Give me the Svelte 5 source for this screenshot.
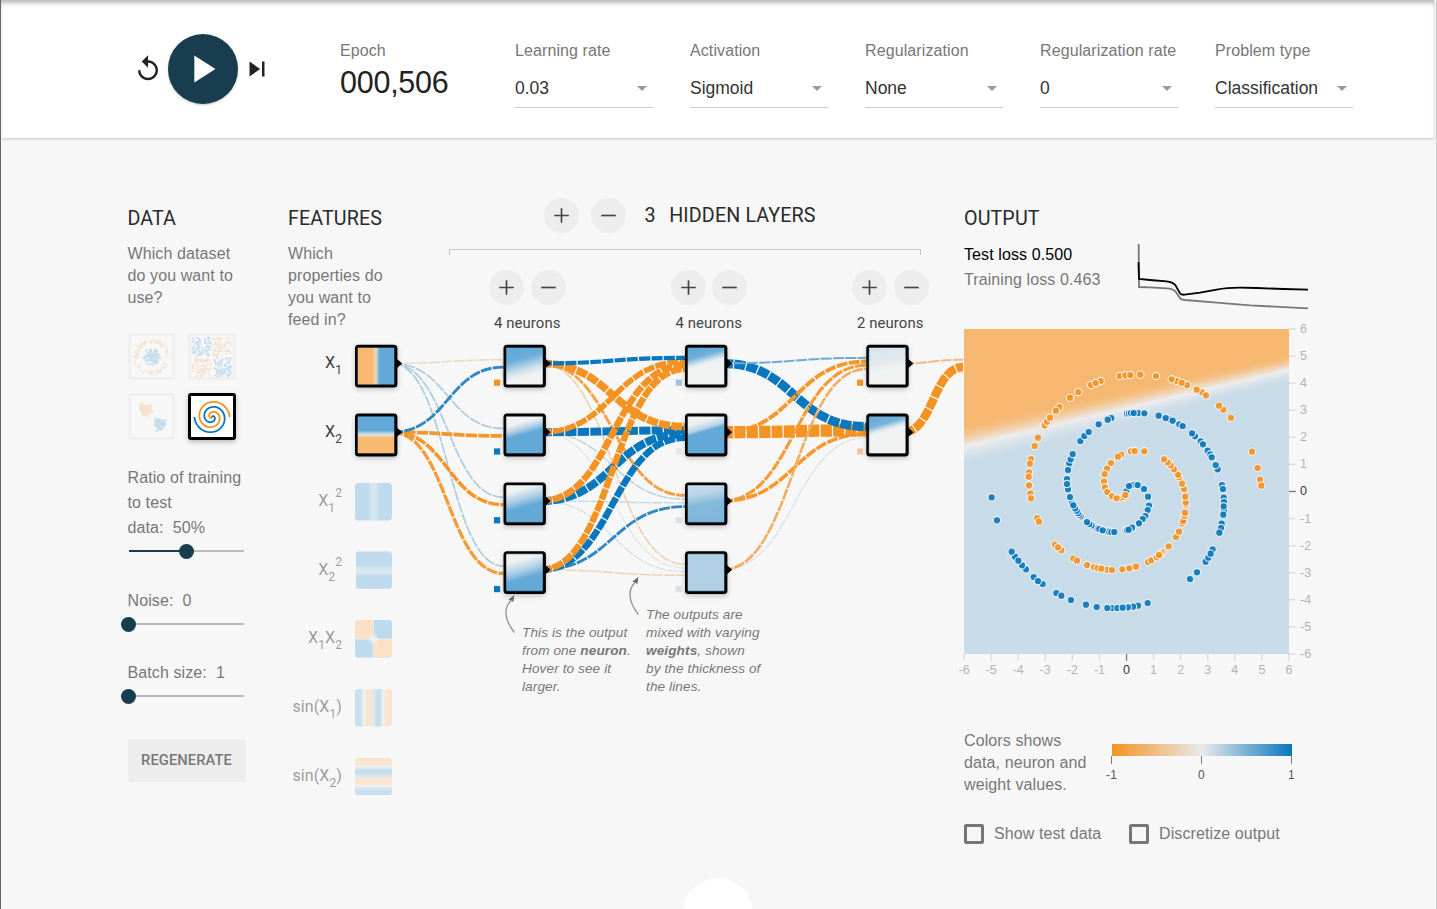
<script>
  import { onMount } from 'svelte';

  const fields = [
    ['Learning rate', '0.03'],
    ['Activation', 'Sigmoid'],
    ['Regularization', 'None'],
    ['Regularization rate', '0'],
    ['Problem type', 'Classification']
  ];
  const layers = ['4 neurons', '4 neurons', '2 neurons'];

  const ORANGE = '#f59322';
  const BLUE = '#0877bd';
  const rowY = [363.4, 432.2, 501, 569.8];
  const colX = [355, 503.6, 685, 866.5, 963];

  // [source, target, colour, width] for each pair of neighbouring layers
  const weights = [
    [
      [0, 0, '#ecd9c3', 1.5], [1, 0, '#2e88c4', 2.9],
      [0, 1, '#aaccdf', 1.7], [1, 1, '#f5962a', 3.7],
      [0, 2, '#aaccdf', 1.7], [1, 2, '#f5962a', 3.5],
      [0, 3, '#aaccdf', 1.7], [1, 3, '#f59c38', 3.3]
    ],
    [
      [0, 0, BLUE, 4.2], [1, 0, ORANGE, 5.6], [2, 0, ORANGE, 6.6], [3, 0, ORANGE, 6.4],
      [0, 1, ORANGE, 7.6], [1, 1, BLUE, 8], [2, 1, BLUE, 8], [3, 1, BLUE, 6.6],
      [0, 2, '#f5a044', 2.8], [1, 2, '#b9d3e2', 1.5], [2, 2, '#c5d9e5', 1.4], [3, 2, '#2e88c4', 2.9],
      [0, 3, '#edd0b0', 1.6], [1, 3, '#e3e4e4', 1.2], [2, 3, '#d4e0e8', 1.3], [3, 3, '#edd3b6', 1.5]
    ],
    [
      [0, 0, '#6eabd0', 2], [1, 0, '#f5982e', 4], [2, 0, '#f59c3a', 3.2], [3, 0, '#f1ad62', 2.6],
      [0, 1, BLUE, 9], [1, 1, ORANGE, 12.3], [2, 1, '#f5992f', 3.6], [3, 1, '#d6e2e9', 1.3]
    ],
    [
      [0, 0, '#f0bb82', 2], [1, 0, ORANGE, 8.6]
    ]
  ];
  const links = weights
    .flatMap((set, l) =>
      set.map(([s, t, color, width]) => {
        const count = [2, 4, 4, 2][l];
        const x0 = colX[l] + 37;
        const x1 = colX[l + 1];
        const y0 = rowY[s];
        const y1 = rowY[t] + ((s - (count - 1) / 2) / count) * 14.8;
        const m = (x0 + x1) / 2;
        return { d: `M${x0},${y0}C${m},${y0} ${m},${y1} ${x1},${y1}`, color, width };
      })
    )
    .reverse();

  const nodes = [
    [355, 0, 'f1'], [355, 1, 'f2'],
    [503.5, 0, 'a1'], [503.5, 1, 'a2'], [503.5, 2, 'a3'], [503.5, 3, 'a4'],
    [685, 0, 'b1'], [685, 1, 'b2'], [685, 2, 'b3'], [685, 3, 'b4'],
    [866.3, 0, 'c1'], [866.3, 1, 'c2']
  ];
  const biases = [
    [494, 0, ORANGE], [494, 1, BLUE], [494, 2, BLUE], [494, 3, BLUE],
    [675.7, 0, '#a0c4dc'], [675.7, 1, '#e6e7e6'], [675.7, 2, '#d9e2e7'], [675.7, 3, '#d7e2e8'],
    [857, 0, ORANGE], [857, 1, '#efc799']
  ];
  // id, tilt in degrees, colour stops
  const W = '#f0f2f2';
  const B = '#62a9d7';
  const heat = [
    ['f1', -90, [[0, '#f9b972'], [0.4, '#f9b972'], [0.5, '#eed9c3'], [0.6, B], [1, B]]],
    ['f2', 0, [[0, B], [0.38, B], [0.5, '#dfe6e6'], [0.57, '#f9b972'], [1, '#f9b972']]],
    ['a1', -16, [[0, B], [0.28, '#6aadd8'], [0.62, '#d3e3ee'], [0.78, W], [1, W]]],
    ['a2', -16, [[0, W], [0.15, W], [0.32, '#b5d2e6'], [0.48, B], [1, B]]],
    ['a3', -16, [[0, W], [0.1, W], [0.38, '#a9cce4'], [0.58, B], [1, B]]],
    ['a4', -16, [[0, W], [0.14, W], [0.42, '#b0d0e6'], [0.66, B], [1, B]]],
    ['b1', -16, [[0, B], [0.2, '#6fb0d9'], [0.4, '#dfe9ef'], [0.48, W], [1, W]]],
    ['b2', -16, [[0, W], [0.14, '#e9eef1'], [0.32, '#b5d2e6'], [0.4, B], [1, B]]],
    ['b3', -10, [[0, '#c6dbe9'], [0.2, '#bdd6e7'], [0.5, '#84b9dc'], [1, '#7fb6db']]],
    ['b4', 0, [[0, '#b1d0e5'], [1, '#b1d0e5']]],
    ['c1', -12, [[0, '#d8e4ed'], [0.4, '#e2eaef'], [0.6, W], [1, W]]],
    ['c2', -16, [[0, '#6aadd8'], [0.18, '#74b2da'], [0.34, '#e0e9ef'], [0.42, W], [1, W]]]
  ];

  const labels = [
    ['X', '1', '', '', '', 368, 1],
    ['X', '2', '', '', '', 437, 1],
    ['X', '1', '2', '', '', 505.5, 0.5],
    ['X', '2', '2', '', '', 574.5, 0.5],
    ['X', '1', '', 'X', '2', 643, 0.5],
    ['sin(X', '1', '', ')', '', 712, 0.5],
    ['sin(X', '2', '', ')', '', 781, 0.5]
  ];

  // sample positions on a 975 × 975 board
  const orangeDots = '242,289 249,278 258,266 286,234 276,245 318,206 343,189 410,156 381,168 395,162 467,141 484,139 499,138 529,137 576,141 638,156 623,151 669,168 653,161 714,190 726,199 698,182 778,242 765,230 801,266 222,326 212,351 201,390 198,404 195,430 194,443 195,469 199,494 201,508 219,567 225,578 273,647 292,664 282,655 328,689 339,695 369,708 390,715 401,717 430,722 412,719 444,723 475,721 496,718 516,713 552,699 562,694 596,669 592,674 587,678 578,685 585,678 614,652 636,624 645,608 655,583 658,576 662,560 663,551 666,526 665,520 664,503 660,480 654,464 645,445 642,437 630,421 620,409 611,400 600,391 541,367 501,367 512,366 471,377 462,383 441,402 429,419 422,435 420,458 423,475 430,489 444,502 473,508 480,504 484,498 458,508 864,368 881,417 888,452 892,470'.split(' ').map((p) => p.split(','));
  const blueDots = '487,487 511,467 502,468 495,471 521,468 540,480 552,503 555,530 551,543 544,561 536,570 525,583 504,596 485,604 489,604 494,602 414,602 421,605 428,607 435,608 442,609 451,609 400,598 406,600 416,604 383,589 376,585 369,579 350,562 346,557 342,552 338,545 333,538 324,523 328,529 318,504 312,481 309,450 309,465 314,410 316,402 312,423 320,391 326,375 349,336 361,321 374,309 404,286 442,267 431,272 489,254 495,253 501,252 523,252 509,252 541,253 584,260 616,271 605,267 626,275 646,286 656,291 693,322 684,313 710,337 717,346 731,365 739,376 743,385 761,421 755,408 774,468 777,480 779,506 780,519 780,545 779,532 778,557 773,584 771,597 766,611 746,661 725,698 733,686 740,674 699,730 678,750 551,822 522,830 507,833 492,835 445,837 460,837 476,836 430,837 398,834 366,827 321,813 277,792 292,800 236,765 209,744 222,756 186,721 174,709 153,683 163,695 143,668 99,574 83,505'.split(' ').map((p) => p.split(','));

  function mulberry(seed) {
    let a = seed;
    return () => {
      a = (a + 0x6d2b79f5) | 0;
      let t = Math.imul(a ^ (a >>> 15), 1 | a);
      t = (t + Math.imul(t ^ (t >>> 7), 61 | t)) ^ t;
      return ((t ^ (t >>> 14)) >>> 0) / 4294967296;
    };
  }
  const rnd = mulberry(11);
  const gauss = () => (rnd() + rnd() + rnd() + rnd() - 2) * 1.2;
  const dotPath = (pts) => pts.map(([x, y]) => `M${x.toFixed(1)},${y.toFixed(1)}h1.8v1.8h-1.8z`).join('');
  const ring = (n, a, b) =>
    Array.from({ length: n }, () => {
      const t = rnd() * 6.2832;
      const r = a + (b - a) * rnd();
      return [20 + r * Math.sin(t), 20 + r * Math.cos(t)];
    });
  const quad = (n, sx, sy) =>
    Array.from({ length: n }, () => [20 + sx * (1 + rnd() * 18.5), 20 + sy * (1 + rnd() * 18.5)]);
  const blob = (n, x, y) => Array.from({ length: n }, () => [x + gauss() * 3.9, y + gauss() * 3.9]);
  const sets = [
    { o: dotPath(ring(90, 14, 18)), b: dotPath(ring(120, 0, 8.5)) },
    { o: dotPath([...quad(65, 1, -1), ...quad(65, -1, 1)]), b: dotPath([...quad(75, -1, -1), ...quad(75, 1, 1)]) },
    { o: dotPath(blob(110, 13.5, 13)), b: dotPath(blob(110, 27.5, 27.5)) }
  ];
  const spiral = (turn) => {
    let d = '';
    for (let i = 0; i <= 120; i++) {
      const r = (i / 120) * 17.6;
      const t = (1.75 * i / 120) * 2 * Math.PI + turn;
      d += `${i ? 'L' : 'M'}${(21 + r * Math.sin(t)).toFixed(2)},${(21 - r * Math.cos(t)).toFixed(2)}`;
    }
    return d;
  };

  const ticks = [6, 5, 4, 3, 2, 1, 0, -1, -2, -3, -4, -5, -6];

  let board;
  onMount(() => {
    const ctx = board.getContext('2d');
    const o = [246, 183, 112];
    const w = [236, 236, 236];
    const b = [200, 219, 232];
    const mix = (p, q, k) => p.map((v, i) => v + (q[i] - v) * k);
    const img = ctx.createImageData(325, 325);
    for (let x = 0; x < 325; x++) {
      const mid = 117 - (x / 325) * 77;
      const up = 23 - (x / 325) * 7;
      const down = 22 - (x / 325) * 8;
      for (let y = 0; y < 325; y++) {
        const dlt = y - mid;
        let k = Math.min(1, Math.abs(dlt) / (dlt < 0 ? up : down));
        k = Math.sin((k * Math.PI) / 2);
        const c = mix(w, dlt < 0 ? o : b, k);
        const n = (y * 325 + x) * 4;
        img.data[n] = c[0];
        img.data[n + 1] = c[1];
        img.data[n + 2] = c[2];
        img.data[n + 3] = 255;
      }
    }
    ctx.putImageData(img, 0, 0);
  });
</script>

{#snippet plus()}
  <span class="round"><svg width="25" height="25" viewBox="0 0 24 24"><path d="M19 12.8h-6.2V19h-1.6v-6.2H5v-1.6h6.2V5h1.6v6.2H19z" /></svg></span>
{/snippet}
{#snippet minus()}
  <span class="round"><svg width="25" height="25" viewBox="0 0 24 24"><path d="M19 12.8H5v-1.6h14z" /></svg></span>
{/snippet}

<div class="page">
  <header>
    <div class="controls">
      <svg class="ctl" width="30" height="30" viewBox="0 0 24 24"><path d="M12 5V1L7 6l5 5V7c3.31 0 6 2.69 6 6s-2.69 6-6 6-6-2.69-6-6H4c0 4.42 3.58 8 8 8s8-3.58 8-8-3.58-8-8-8z" /></svg>
      <div class="play"><svg width="46" height="46" viewBox="0 0 24 24"><path d="M8 5v14l11-7z" /></svg></div>
      <svg class="ctl" width="30" height="30" viewBox="0 0 24 24"><path d="M6 18l8.5-6L6 6v12zM16 6v12h2V6h-2z" /></svg>
    </div>
    <div class="epoch">
      <div class="label">Epoch</div>
      <div class="count">000,506</div>
    </div>
    {#each fields as [name, value]}
      <div class="field">
        <div class="label">{name}</div>
        <div class="select"><span>{value}</span><i></i></div>
      </div>
    {/each}
  </header>

  <main>
    <aside>
      <h4>DATA</h4>
      <p>Which dataset do you want to use?</p>
      <div class="sets">
        {#each sets as s}
          <div class="set">
            <svg width="41" height="41" viewBox="0 0 41 41"><path d={s.o} fill={ORANGE} /><path d={s.b} fill={BLUE} /></svg>
          </div>
        {/each}
        <div class="set on">
          <svg width="42" height="41" viewBox="0 0 42 41" fill="none" stroke-width="1.8">
            <path d={spiral(Math.PI)} stroke={ORANGE} /><path d={spiral(0)} stroke={BLUE} />
          </svg>
        </div>
      </div>
      <div class="param ratio">Ratio of training<br />to test<br />data:&nbsp; 50%</div>
      <div class="slider half"><b></b></div>
      <div class="param noise">Noise:&nbsp; 0</div>
      <div class="slider"><b></b></div>
      <div class="param batch">Batch size:&nbsp; 1</div>
      <div class="slider"><b></b></div>
      <div class="regen">REGENERATE</div>
    </aside>

    <section class="network">
      <div class="top">
        <div class="features">
          <h4>FEATURES</h4>
          <p>Which properties do you want to feed in?</p>
        </div>
        <div class="hidden">
          <div class="title">{@render plus()}{@render minus()}<span class="num">3</span><span>HIDDEN LAYERS</span></div>
          <div class="bracket"></div>
          <div class="layers">
            {#each layers as l}
              <div class="layer">
                <div class="pair">{@render plus()}{@render minus()}</div>
                <div class="count-label">{l}</div>
              </div>
            {/each}
          </div>
        </div>
      </div>

      <svg class="graph" width="676" height="470" viewBox="288 335 676 470">
        <defs>
          {#each heat as [id, tilt, stops]}
            <linearGradient {id} x1="0" y1="0" x2="0" y2="1" gradientTransform="rotate({tilt} .5 .5)">
              {#each stops as [o, c]}<stop offset={o} stop-color={c} />{/each}
            </linearGradient>
          {/each}
          <linearGradient id="band">
            <stop offset="0" stop-color="#bfdaec" /><stop offset=".36" stop-color="#bfdaec" /><stop offset=".44" stop-color="#d5e6ef" /><stop offset=".58" stop-color="#d5e6ef" /><stop offset=".65" stop-color="#bfdaec" /><stop offset="1" stop-color="#bfdaec" />
          </linearGradient>
          <linearGradient id="wave">
            <stop offset="0" stop-color="#c5deed" /><stop offset=".14" stop-color="#c9e0ed" /><stop offset=".25" stop-color="#f3f1ef" /><stop offset=".32" stop-color="#fae4cc" /><stop offset=".43" stop-color="#f8e6d3" /><stop offset=".51" stop-color="#dee9ee" /><stop offset=".6" stop-color="#c3dded" /><stop offset=".68" stop-color="#c7deec" /><stop offset=".76" stop-color="#eff2f3" /><stop offset=".84" stop-color="#fae5d0" /><stop offset="1" stop-color="#fae4cd" />
          </linearGradient>
          <radialGradient id="spot"><stop offset="0" stop-color="#ecf1f2" /><stop offset=".4" stop-color="#ecf1f2" stop-opacity=".8" /><stop offset="1" stop-color="#ecf1f2" stop-opacity="0" /></radialGradient>
          <filter id="soft" x="-30%" y="-30%" width="160%" height="170%"><feDropShadow dx="0" dy="2" stdDeviation="2.4" flood-color="#000" flood-opacity=".22" /></filter>
          <clipPath id="tile"><rect width="37" height="37.5" rx="3.5" /></clipPath>
        </defs>

        {#each links as k}
          <path d={k.d} fill="none" stroke={k.color} stroke-width={k.width} stroke-dasharray="11.1 1.25" />
        {/each}

        {#each nodes as [x, r, id]}
          <rect {x} y={rowY[r] - 18.6} width="42.4" height="42.8" rx="3.5" filter="url(#soft)" />
          <rect x={x + 2.5} y={rowY[r] - 16} width="37" height="37.4" rx="1" fill="url(#{id})" stroke="#0c1c28" stroke-opacity=".65" stroke-width=".8" />
          <path d="M{x + 41.5},{rowY[r] - 5}l5.6,5l-5.6,5z" />
        {/each}
        {#each biases as [x, r, c]}
          <rect {x} y={rowY[r] + 16.2} width="6.2" height="6.2" fill={c} />
        {/each}

        <g clip-path="url(#tile)" transform="translate(355 483)"><rect width="37" height="38" fill="url(#band)" /></g>
        <g clip-path="url(#tile)" transform="translate(355 551.3)"><rect width="38" height="37" fill="url(#band)" transform="rotate(90) translate(0 -38)" /></g>
        <g clip-path="url(#tile)" transform="translate(355 620)">
          <rect width="38" height="38" fill="#bfdaec" />
          <rect width="18.3" height="19" fill="#fbe1c4" /><rect x="18.3" y="19" width="19" height="19" fill="#fbe1c4" />
          <path d="M18.3 0v38M0 19h37" stroke="#e8eaea" stroke-opacity=".7" stroke-width="1.6" />
          <circle cx="18.3" cy="18.8" r="6" fill="url(#spot)" />
        </g>
        <g clip-path="url(#tile)" transform="translate(355 689)"><rect width="37" height="38" fill="url(#wave)" /></g>
        <g clip-path="url(#tile)" transform="translate(355 757.8)"><rect width="37.5" height="38" fill="url(#wave)" transform="translate(0 37.5) rotate(-90)" /></g>

        {#each labels as [a, s1, sup, c, s2, y, op]}
          <text class="feat" x="342" {y} fill-opacity={op}>{a}<tspan class="small" dy="6">{s1}</tspan>{#if sup}<tspan class="small" dy="-14.5">{sup}</tspan>{/if}{#if c}<tspan dy="-6">{c}</tspan>{/if}{#if s2}<tspan class="small" dy="6">{s2}</tspan>{/if}</text>
        {/each}

        <g fill="none" stroke="#888" stroke-width="1.2">
          <path d="M514.4,632.7Q499,612 511.5,600" /><path d="M638.4,614.7Q623,594 635.5,582" />
        </g>
        <g fill="#666"><path d="M514.3,595l-1,7.2l-2-2l-3,-.4z" /><path d="M638.3,577l-1,7.2l-2-2l-3,-.4z" /></g>
        <g class="note">
          <text x="522" y="637.4">This is the output</text>
          <text x="522" y="655.4">from one <tspan class="strong">neuron</tspan>.</text>
          <text x="522" y="673.4">Hover to see it</text>
          <text x="522" y="691.4">larger.</text>
          <text x="646" y="619.4">The outputs are</text>
          <text x="646" y="637.4">mixed with varying</text>
          <text x="646" y="655.4"><tspan class="strong">weights</tspan>, shown</text>
          <text x="646" y="673.4">by the thickness of</text>
          <text x="646" y="691.4">the lines.</text>
        </g>
      </svg>
    </section>

    <section class="output">
      <h4>OUTPUT</h4>
      <div class="loss">
        <div class="numbers"><div class="test">Test loss 0.500</div><div>Training loss 0.463</div></div>
        <svg width="172" height="68" viewBox="561 130 516 204" fill="none" stroke-width="5.5">
          <path d="M566 133L567 262L600 263L650 266Q668 267 676 275L692 298Q696 300 705 301L800 309L900 317L1074 326" stroke="#777" />
          <path d="M565.5 188L567 238L600 241L650 245Q668 247 676 256L690 281Q694 286 704 285L750 279L800 270Q830 264 870 264L920 265L1000 268L1074 270" stroke="#000" />
        </svg>
      </div>
      <div class="plot">
        <div class="board">
          <canvas bind:this={board} width="325" height="325"></canvas>
          <svg class="dots" width="325" height="325" viewBox="0 0 975 975">
            <g fill={BLUE}>{#each blueDots as [cx, cy]}<circle {cx} {cy} r="11" />{/each}</g>
            <g fill={ORANGE}>{#each orangeDots as [cx, cy]}<circle {cx} {cy} r="11" />{/each}</g>
          </svg>
        </div>
        <svg class="axis" width="24" height="345" viewBox="0 -10 24 345">
          {#each ticks as t, i}
            <path d="M0 {i * 27.08}h6.8" stroke={t ? '#d9d9d9' : '#777'} />
            <text x="11" y={i * 27.08 + 4} fill={t ? '#b4b4b4' : '#333'}>{t}</text>
          {/each}
        </svg>
        <svg class="axis bottom" width="345" height="28" viewBox="-10 0 345 28">
          {#each ticks as t, i}
            <path d="M{325 - i * 27.08} 0v6.8" stroke={t ? '#d9d9d9' : '#777'} />
            <text text-anchor="middle" x={325 - i * 27.08} y="20" fill={t ? '#b4b4b4' : '#333'}>{t}</text>
          {/each}
        </svg>
      </div>
      <div class="legend">
        <p>Colors shows data, neuron and weight values.</p>
        <div class="scale">
          <div class="bar"></div>
          <div class="marks"><span>-1</span><span>0</span><span>1</span></div>
        </div>
      </div>
      <div class="checks">
        <label><i></i>Show test data</label>
        <label><i></i>Discretize output</label>
      </div>
    </section>
  </main>
  <div class="more"></div>
</div>

<style>
  :global(body) { margin: 0; background: #fff; overflow: hidden; }
  .page { position: relative; box-sizing: border-box; width: 1437px; height: 909px; overflow: hidden; border-left: 1px solid #666; border-right: 1px solid #ccc; padding-right: 2px; background: #f7f7f7; font-family: 'Liberation Sans', Arial, sans-serif; font-size: 16px; letter-spacing: .1px; color: #777; }
  header { box-sizing: border-box; height: 138px; background: #fff; display: flex; padding-left: 132px; position: relative; box-shadow: inset 0 5px 5px -2px rgba(0,0,0,.28), 0 1px 3px rgba(0,0,0,.2); }
  .controls { display: flex; align-items: center; width: 207px; height: 138px; }
  .ctl { fill: #222; }
  .play { width: 70px; height: 70px; border-radius: 50%; background: #183d4e; display: flex; align-items: center; justify-content: center; margin: 0 4px 0 5px; box-shadow: 0 1px 2px rgba(0,0,0,.25); }
  .play svg { fill: #fff; margin-right: 2px; }
  .epoch { width: 175px; padding-top: 41px; }
  .label { line-height: 20px; white-space: nowrap; }
  .count { font-size: 30.5px; letter-spacing: -.25px; color: #222; line-height: 36px; margin-top: 3px; }
  .field { width: 138px; margin-right: 37px; padding-top: 41px; }
  .select { display: flex; align-items: center; justify-content: space-between; height: 38px; margin-top: 9px; border-bottom: 1px solid #ccc; color: #333; font-size: 17.5px; letter-spacing: 0; box-sizing: border-box; }
  .select i { width: 0; height: 0; border: 5px solid transparent; border-top-color: #999; border-bottom: 0; margin-right: 6px; }

  main { display: flex; padding: 1px 0 0 126.5px; }
  h4 { margin: 0; font: 400 19.7px/24px Roboto, sans-serif; color: #2a2a2a; letter-spacing: .1px; }
  p { margin: 0; line-height: 22px; }
  aside { width: 119px; margin-right: 41.5px; padding-top: 68px; }
  aside p { margin-top: 12px; }
  .sets { display: grid; grid-template-columns: 47px 48px; column-gap: 13px; row-gap: 13px; grid-auto-rows: 47px; margin-top: 24px; }
  .set { box-sizing: border-box; border: 3px solid #efefef; border-radius: 3px; overflow: hidden; }
  .set path { opacity: .2; }
  .set.on { border-color: #000; background: #fff; box-shadow: 0 2px 5px rgba(0,0,0,.25); }
  .set.on path { opacity: 1; }
  .set svg { display: block; }
  .param { line-height: 25px; white-space: nowrap; }
  .ratio { margin-top: 25px; }
  .slider { height: 2px; width: 115px; margin: 10px 0 0 1.5px; background: #bbb; position: relative; }
  .slider b { position: absolute; left: -8px; top: -6.5px; width: 15px; height: 15px; border-radius: 50%; background: #183d4e; }
  .slider.half { background: linear-gradient(90deg, #183d4e 50%, #bbb 50%); }
  .slider.half b { left: 50px; }
  .noise { margin-top: 36px; }
  .batch { margin-top: 35px; }
  .regen { margin-top: 42px; width: 118px; height: 43px; line-height: 42px; text-align: center; background: #ededed; border-radius: 3px; font-family: Roboto, sans-serif; font-weight: 500; font-size: 14.7px; }

  .network { width: 676px; }
  .top { display: flex; height: 196px; }
  .features { width: 108px; padding-top: 68px; margin-right: 53px; }
  .features p { margin-top: 12px; }
  .hidden { width: 515px; padding-top: 59px; }
  .title { display: flex; align-items: center; margin-left: 95px; height: 35px; font: 400 19.7px/35px Roboto, sans-serif; color: #2a2a2a; white-space: nowrap; letter-spacing: .12px; }
  .round { width: 35px; height: 35px; border-radius: 50%; background: #ededed; display: flex; align-items: center; justify-content: center; }
  .round svg { fill: #444; }
  .title .round { margin-right: 11.5px; }
  .num { margin: 0 13.5px 0 7.5px; }
  .bracket { box-sizing: border-box; width: 472px; height: 6px; margin-top: 16px; border: 1px solid #c4c4c4; border-bottom: 0; }
  .layers { display: flex; gap: 105px; margin: 15px 0 0 40px; }
  .layer { width: 76.5px; }
  .pair { display: flex; justify-content: space-between; }
  .count-label { text-align: center; font: 400 14.9px/20px Roboto, sans-serif; color: #444; margin-top: 8px; }
  .graph { display: block; }
  .feat { font: 400 16px Roboto, sans-serif; fill: #3c3c3c; text-anchor: end; }
  .feat .small { font-size: 12px; }
  .note { font: italic 13.6px 'Liberation Sans', Arial, sans-serif; fill: #777; }
  .strong { font-weight: bold; }

  .output { width: 346px; padding-top: 68px; }
  .loss { display: flex; height: 98px; }
  .numbers { width: 173px; line-height: 25px; padding-top: 11px; white-space: nowrap; }
  .loss svg { margin-top: 12px; }
  .test { color: #000; }
  .plot { display: grid; grid-template-columns: 325px 24px; grid-template-rows: 325px 28px; }
  .board { position: relative; width: 325px; height: 325px; }
  .board canvas { display: block; }
  .dots { position: absolute; inset: 0; }
  .dots circle { stroke: #f4f6f7; stroke-width: 3.4; stroke-opacity: .9; fill-opacity: .92; }
  .axis { font-size: 12.5px; letter-spacing: 0; margin-top: -10px; }
  .axis.bottom { margin: 0 -10px; }
  .axis path { stroke-width: 1.3; }
  .legend { display: flex; margin-top: 48px; }
  .legend p { width: 134px; }
  .scale { width: 208px; padding-top: 14px; }
  .bar { width: 180px; height: 12px; margin-left: 13.5px; background: linear-gradient(90deg, #f59322, #e8eaeb 50%, #0877bd); }
  .marks { display: flex; justify-content: space-between; margin-left: -.5px; width: 208px; font-size: 12px; line-height: 14px; color: #555; }
  .marks span { width: 28px; text-align: center; background: linear-gradient(#777, #777) 50% 0 / 1px 8px no-repeat; padding-top: 12px; }
  .checks { display: flex; margin-top: 27px; line-height: 22px; }
  .checks label { display: flex; align-items: center; width: 165px; white-space: nowrap; }
  .checks i { box-sizing: border-box; width: 20px; height: 20px; border: 3px solid #777; border-radius: 2px; margin-right: 10px; }
  .more { position: absolute; left: 682px; top: 878px; width: 70px; height: 70px; border-radius: 50%; background: #fff; }
</style>
